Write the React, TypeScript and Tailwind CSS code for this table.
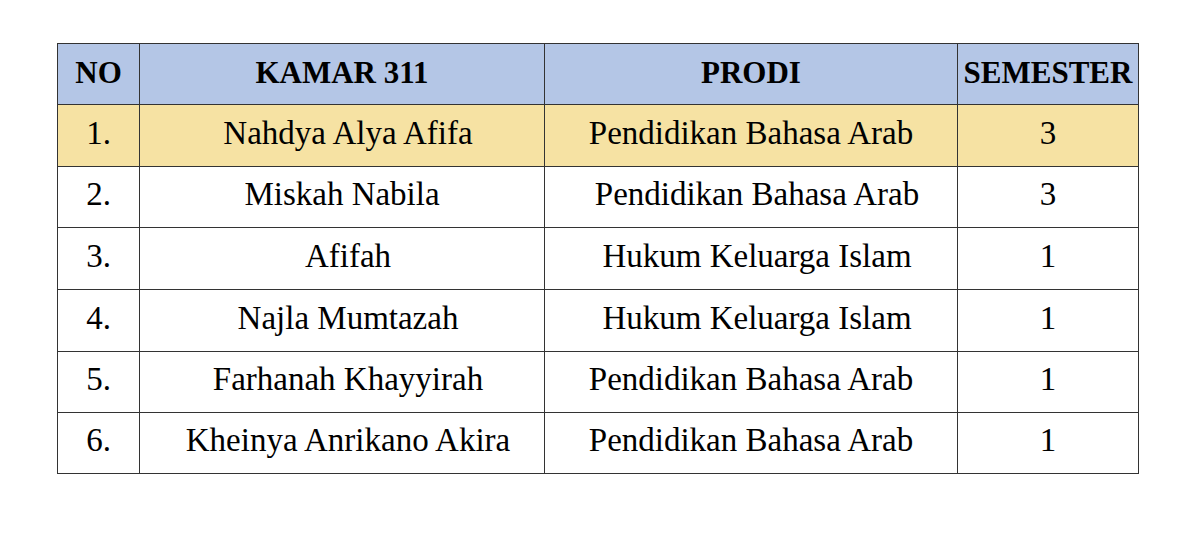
import React from 'react';

const rows = [
  { no: '1.', name: 'Nahdya Alya Afifa', prodi: 'Pendidikan Bahasa Arab', sem: '3', h: 'h-[62px]', hl: true, np: 'pl-[12px]', pp: 'pl-0' },
  { no: '2.', name: 'Miskah Nabila', prodi: 'Pendidikan Bahasa Arab', sem: '3', h: 'h-[61px]', hl: false, np: 'pl-0', pp: 'pl-[12px]' },
  { no: '3.', name: 'Afifah', prodi: 'Hukum Keluarga Islam', sem: '1', h: 'h-[62px]', hl: false, np: 'pl-[12px]', pp: 'pl-[12px]' },
  { no: '4.', name: 'Najla Mumtazah', prodi: 'Hukum Keluarga Islam', sem: '1', h: 'h-[62px]', hl: false, np: 'pl-[12px]', pp: 'pl-[12px]' },
  { no: '5.', name: 'Farhanah Khayyirah', prodi: 'Pendidikan Bahasa Arab', sem: '1', h: 'h-[61px]', hl: false, np: 'pl-[12px]', pp: 'pl-0' },
  { no: '6.', name: 'Kheinya Anrikano Akira', prodi: 'Pendidikan Bahasa Arab', sem: '1', h: 'h-[61px]', hl: false, np: 'pl-[12px]', pp: 'pl-0' },
];

const cell = "border border-[#333333] font-[family-name:'Liberation_Serif',serif] leading-none text-center";

const App: React.FC = () => {
  return (
    <div className="w-[1200px] h-[540px] bg-white pt-[43px] pl-[57px] font-[family-name:'Liberation_Serif',serif]">
      <table className="border-collapse text-black">
        <thead>
          <tr className="bg-[#b4c6e6] h-[61px]">
            <th className={`w-[82px] ${cell} text-[31px] font-bold pb-[3px]`}>NO</th>
            <th className={`w-[405px] ${cell} text-[31px] font-bold pb-[3px]`}>KAMAR 311</th>
            <th className={`w-[413px] ${cell} text-[31px] font-bold pb-[3px]`}>PRODI</th>
            <th className={`w-[181px] ${cell} text-[31px] font-bold pb-[3px]`}>SEMESTER</th>
          </tr>
        </thead>
        <tbody>
          {rows.map(r => (
            <tr key={r.no} className={`${r.h} ${r.hl ? 'bg-[#f6e2a3]' : 'bg-white'}`}>
              <td className={`${cell} text-[33px] pb-[5px]`}>{r.no}</td>
              <td className={`${cell} text-[33px] pb-[5px] ${r.np}`}>{r.name}</td>
              <td className={`${cell} text-[33px] pb-[5px] ${r.pp}`}>{r.prodi}</td>
              <td className={`${cell} text-[33px] pb-[5px]`}>{r.sem}</td>
            </tr>
          ))}
        </tbody>
      </table>
    </div>
  );
};

export default App;
